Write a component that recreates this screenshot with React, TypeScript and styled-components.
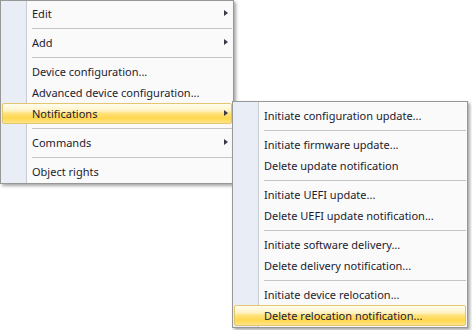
import styled, { createGlobalStyle } from 'styled-components';

let GlobalStyle = createGlobalStyle`
  html, body {
    margin: 0;
    padding: 0;
    background: #ffffff;
  }
  body {
    font-family: 'Noto Sans', 'Open Sans', Arial, sans-serif;
    font-size: 11px;
    color: #1c1c30;
  }
`;

let Stage = styled.div`
  position: relative;
  width: 472px;
  height: 330px;
  overflow: hidden;
`;

let Menu = styled.div<{ $width: number }>`
  box-sizing: border-box;
  width: ${p => p.$width}px;
  padding: 2px 1px 1px;
  border: 1px solid #979797;
  background: linear-gradient(
    to right,
    #e9eef6 0,
    #e9eef6 25px,
    #c8ccd3 25px,
    #c8ccd3 26px,
    #fafafa 26px
  );
  box-shadow: 2px 2px 3px rgba(0, 0, 0, 0.35);
  display: flex;
  flex-direction: column;
`;

let SubMenu = styled(Menu)`
  position: absolute;
  left: 232px;
  top: 101px;
  padding-top: 3px;
`;

let Item = styled.div<{ $active?: boolean }>`
  position: relative;
  box-sizing: border-box;
  height: 21px;
  line-height: 19px;
  padding-left: 29px;
  white-space: nowrap;
  border: 1px solid ${p => (p.$active ? '#e3c66e' : 'transparent')};
  border-radius: 2px;
  background: ${p =>
    p.$active
      ? 'linear-gradient(to bottom, #fffdf0 0%, #fff3c4 35%, #ffe17a 50%, #ffd84e 75%, #ffe48a 100%)'
      : 'transparent'};
`;

let Arrow = styled.span`
  position: absolute;
  right: 3px;
  top: 6px;
  width: 0;
  height: 0;
  border-left: 4px solid #3a3a46;
  border-top: 3.5px solid transparent;
  border-bottom: 3.5px solid transparent;
`;

let Separator = styled.div`
  height: 8px;
  display: flex;
  align-items: center;
  padding-left: 30px;

  &::after {
    content: '';
    flex: 1;
    height: 1px;
    background: #c5c5c5;
  }
`;

type Entry = { label?: string; sub?: boolean; active?: boolean; sep?: boolean };

let mainItems: Entry[] = [
  { label: 'Edit', sub: true },
  { sep: true },
  { label: 'Add', sub: true },
  { sep: true },
  { label: 'Device configuration...' },
  { label: 'Advanced device configuration...' },
  { label: 'Notifications', sub: true, active: true },
  { sep: true },
  { label: 'Commands', sub: true },
  { sep: true },
  { label: 'Object rights' },
];

let notifyItems: Entry[] = [
  { label: 'Initiate configuration update...' },
  { sep: true },
  { label: 'Initiate firmware update...' },
  { label: 'Delete update notification' },
  { sep: true },
  { label: 'Initiate UEFI update...' },
  { label: 'Delete UEFI update notification...' },
  { sep: true },
  { label: 'Initiate software delivery...' },
  { label: 'Delete delivery notification...' },
  { sep: true },
  { label: 'Initiate device relocation...' },
  { label: 'Delete relocation notification...', active: true },
];

let renderEntries = (entries: Entry[]) =>
  entries.map((e, i) =>
    e.sep ? (
      <Separator key={i} />
    ) : (
      <Item key={i} $active={e.active}>
        {e.label}
        {e.sub && <Arrow />}
      </Item>
    )
  );

let App = () => {
  return (
    <>
      <GlobalStyle />
      <Stage>
        <Menu $width={234}>{renderEntries(mainItems)}</Menu>
        <SubMenu $width={236}>{renderEntries(notifyItems)}</SubMenu>
      </Stage>
    </>
  );
};

export default App;
